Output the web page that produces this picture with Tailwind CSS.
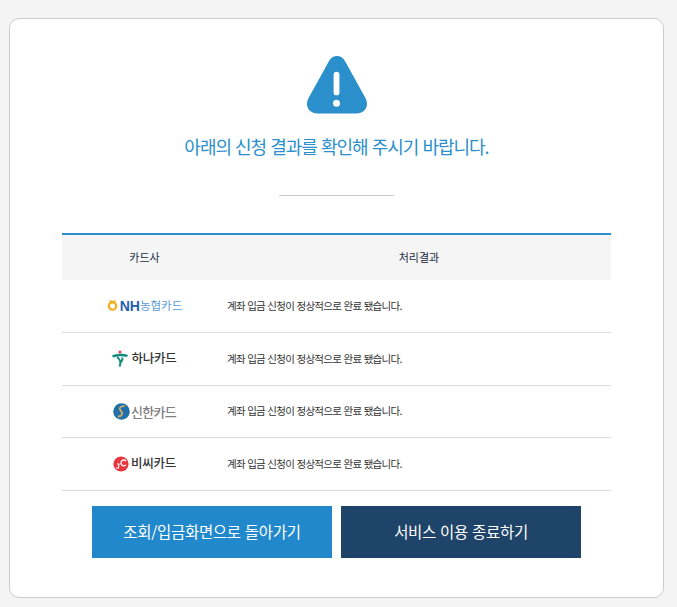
<!DOCTYPE html>
<html lang="ko">
<head>
    <meta charset="UTF-8">
    <title>신청 결과</title>
    <script src="https://cdn.jsdelivr.net/npm/@tailwindcss/browser@4"></script>
</head>
<body class="bg-[#f4f4f4] font-['Noto_Sans_CJK_KR','Noto_Sans',sans-serif]">
    <div class="h-[607px] pt-[18px] pl-[9px] pr-[13px]">
        <div class="h-[580px] bg-white border border-[#cccccc] rounded-[10px] flex flex-col items-center">
            <svg class="mt-[36px] block" width="62" height="60" viewBox="0 0 64 61" preserveAspectRatio="none">
                <path d="M23.5 6.5 C27.5 -0.8 36.5 -0.8 40.5 6.5 L61.5 44 C65.5 51.5 61 59.5 52 59.5 L12 59.5 C3 59.5 -1.5 51.5 2.5 44 Z" fill="#2b8fcb"/>
                <rect x="28.5" y="17" width="6" height="24" rx="3" fill="#fff"/>
                <circle cx="31.5" cy="49" r="3.6" fill="#fff"/>
            </svg>
            <p class="mt-[18px] h-[26px] leading-[26px] text-[18px] tracking-[-1px] text-[#2b8fcb]">아래의 신청 결과를 확인해 주시기 바랍니다.</p>
            <div class="mt-[36px] w-[115px] h-px bg-[#cccccc]"></div>
            <table class="mt-[37px] w-[549px] border-t-2 border-[#2b8fcb] table-fixed border-collapse">
                <thead>
                    <tr class="h-[46px] bg-[#f5f5f5] text-[11px] text-[#222a44]">
                        <th class="w-[165px] font-normal">카드사</th>
                        <th class="font-normal">처리결과</th>
                    </tr>
                </thead>
                <tbody class="text-[10.5px] tracking-[-0.7px] text-[#333333]">
                    <tr class="h-[52px] border-b border-[#dddddd]">
                        <td>
                            <div class="flex items-center justify-center gap-[2px]">
                                <svg width="11" height="11" viewBox="0 0 11 11">
                                    <circle cx="5.5" cy="6" r="3.7" fill="none" stroke="#f0ae1e" stroke-width="2.2"/>
                                    <path d="M2.5 0.5 L5.5 2 L8.5 0.5" fill="none" stroke="#f0ae1e" stroke-width="1.4"/>
                                </svg>
                                <span class="flex items-center text-[11.5px] leading-none tracking-normal text-[#5a9bd5]"><b class="font-['Liberation_Sans'] text-[14px] text-[#1f5fae]">NH</b>농협카드</span>
                            </div>
                        </td>
                        <td>계좌 입금 신청이 정상적으로 완료 됐습니다.</td>
                    </tr>
                    <tr class="h-[53px] border-b border-[#dddddd]">
                        <td>
                            <div class="flex items-center justify-center gap-[3px]">
                                <svg width="16" height="17" viewBox="0 0 16 17">
                                    <circle cx="8" cy="2" r="1.6" fill="#e0455a"/>
                                    <path d="M0.5 6.5 C4 4.5 12 4.5 15.5 6" fill="none" stroke="#128a7c" stroke-width="2.4"/>
                                    <path d="M5 7 C8 9 9.5 12 7.5 16.5 M10.5 7.5 C10.5 10 10 12 7.5 13" fill="none" stroke="#128a7c" stroke-width="2"/>
                                </svg>
                                <span class="text-[12.5px] leading-none font-medium tracking-[-0.2px] text-[#333333]">하나카드</span>
                            </div>
                        </td>
                        <td>계좌 입금 신청이 정상적으로 완료 됐습니다.</td>
                    </tr>
                    <tr class="h-[52px] border-b border-[#dddddd]">
                        <td>
                            <div class="flex items-center justify-center gap-[1px]">
                                <svg width="17" height="17" viewBox="0 0 16 16">
                                    <circle cx="8" cy="8" r="7.8" fill="#1f6fa8"/>
                                    <path d="M11 3 C7 2.5 5 5 7.5 7.5 C10 10 8 12.5 4.5 13" fill="none" stroke="#c9a86a" stroke-width="1.8"/>
                                </svg>
                                <span class="text-[13px] leading-none font-medium text-[#808080]">신한카드</span>
                            </div>
                        </td>
                        <td>계좌 입금 신청이 정상적으로 완료 됐습니다.</td>
                    </tr>
                    <tr class="h-[53px] border-b border-[#dddddd]">
                        <td>
                            <div class="flex items-center justify-center gap-[2px]">
                                <svg width="16" height="16" viewBox="0 0 16 16">
                                    <circle cx="8" cy="8" r="7.6" fill="#e8363f"/>
                                    <path d="M13 5 C11 3 8 4 8 7 C8 10 11 10.5 13 9" fill="none" stroke="#fff" stroke-width="1.4"/>
                                    <path d="M4 8 L6 8 L5.5 12 L3 12" fill="none" stroke="#fff" stroke-width="1.1"/>
                                </svg>
                                <span class="text-[12.5px] leading-none font-medium tracking-[-0.2px] text-[#333333]">비씨카드</span>
                            </div>
                        </td>
                        <td>계좌 입금 신청이 정상적으로 완료 됐습니다.</td>
                    </tr>
                </tbody>
            </table>
            <div class="mt-[15px] flex gap-[9px]">
                <a class="w-[240px] h-[52px] flex items-center justify-center bg-[#2188cb] text-white text-[15.5px] tracking-[-0.3px]">조회/입금화면으로 돌아가기</a>
                <a class="w-[240px] h-[52px] flex items-center justify-center bg-[#1f4469] text-white text-[15.5px] tracking-[-0.3px]">서비스 이용 종료하기</a>
            </div>
        </div>
    </div>
</body>
</html>
